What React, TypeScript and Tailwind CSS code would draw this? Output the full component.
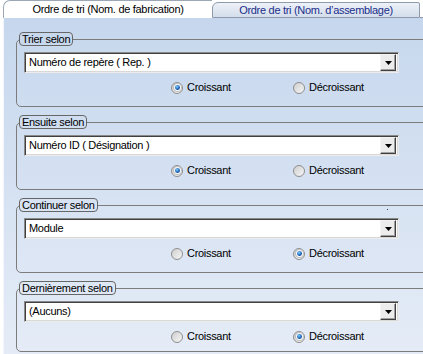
import React from 'react'

interface Group {
  legend: string
  value: string
  descending: boolean
  last?: boolean
  dot?: boolean
}

const groups: Group[] = [
  { legend: 'Trier selon', value: 'Numéro de repère ( Rep. )', descending: false },
  { legend: 'Ensuite selon', value: 'Numéro ID ( Désignation )', descending: false },
  { legend: 'Continuer selon', value: 'Module', descending: true, dot: true },
  { legend: 'Dernièrement selon', value: '(Aucuns)', descending: true, last: true },
]

function Radio({ checked, label }: { checked: boolean; label: string }) {
  return (
    <span className="flex items-center gap-[4px]">
      <span className="flex h-[12px] w-[12px] items-center justify-center rounded-full border border-[#8e8e8e] bg-gradient-to-br from-[#cfcfcf] to-[#f6f6f6]">
        {checked && (
          <span className="h-[7px] w-[7px] rounded-full border border-white bg-[radial-gradient(circle_at_40%_35%,#7fd0ff,#1d62b8_55%,#0b3a7a)] shadow-[0_0_0_1px_#bdbdbd]" />
        )}
      </span>
      <span className="font-normal">{label}</span>
    </span>
  )
}

function Combo({ value, dot }: { value: string; dot?: boolean }) {
  return (
    <div className="relative ml-[7px] mt-[6px] flex h-[21px] w-[375px] items-center border border-t-[#8a8a8a] border-l-[#8a8a8a] border-b-[#ececec] border-r-[#ececec] bg-white shadow-[inset_1px_1px_0_#404040,inset_-1px_-1px_0_#d8d8d8]">
      {dot && <span className="absolute left-[362px] top-[-10px] h-[1px] w-[1px] bg-[#404040]" />}
      <span className="flex-1 pl-[4px] leading-[19px]">{value}</span>
      <span className="mr-[2px] flex h-[17px] w-[16px] items-center justify-center border border-t-[#f4f4f4] border-l-[#f4f4f4] border-b-[#404040] border-r-[#404040] bg-[#ececec] shadow-[inset_-1px_-1px_0_#a0a0a0]">
        <svg width="7" height="4" viewBox="0 0 7 4">
          <polygon points="0,0 7,0 3.5,4" fill="#000" />
        </svg>
      </span>
    </div>
  )
}

export default function App() {
  return (
    <div className="h-[354px] w-[423px] overflow-hidden bg-white font-['Liberation_Sans',Arial,sans-serif] text-[11px] font-normal tracking-[-0.3px] text-black">
      <div className="flex h-[18px] items-end">
        <div className="ml-[3px] flex h-[18px] w-[209px] items-center justify-center rounded-tl-[7px] border-l border-t border-[#9ba7b7] bg-white pb-[1px]">
          Ordre de tri (Nom. de fabrication)
        </div>
        <div className="flex h-[16px] w-[208px] items-center justify-center rounded-tl-[6px] rounded-tr-[2px] border border-[#8f9bad] bg-gradient-to-b from-[#eef2f8] to-[#d3ddeb] text-[#1b2e8a]">
          Ordre de tri (Nom. d’assemblage)
        </div>
        <div className="h-[1px] flex-1 bg-[#8f9bad]" />
      </div>
      <div className="ml-[3px] flex h-[336px] w-[440px] flex-col gap-[8px] border-l border-[#f2f6fb] bg-gradient-to-b from-[#c6d7ed] to-[#e5ecf7] pl-[12px] pt-[14px]">
        {groups.map((g) => (
          <fieldset
            key={g.legend}
            className={`w-[430px] rounded-[5px] border border-[#7c7c7c] ${g.last ? 'pb-[8px]' : 'pb-[12px]'}`}
          >
            <legend className="ml-[2px] h-[14px] rounded-[4px] border border-[#666] px-[2px] font-normal leading-[12px]">
              {g.legend}
            </legend>
            <Combo value={g.value} dot={g.dot} />
            <div className="ml-[154px] mt-[8px] flex h-[13px] items-center">
              <span className="w-[122px]">
                <Radio checked={!g.descending} label="Croissant" />
              </span>
              <Radio checked={g.descending} label="Décroissant" />
            </div>
          </fieldset>
        ))}
      </div>
    </div>
  )
}
